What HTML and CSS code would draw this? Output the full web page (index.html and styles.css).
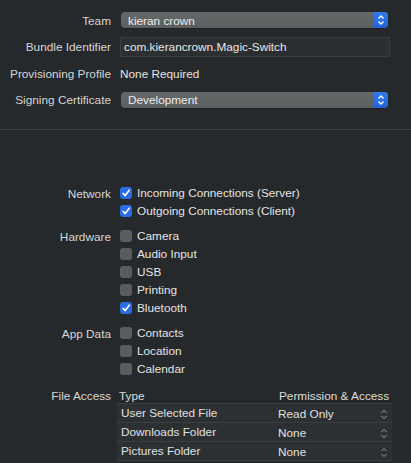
FILE: index.html
```html
<!DOCTYPE html>
<html>
<head>
<meta charset="utf-8">
<link rel="stylesheet" href="styles.css">
</head>
<body>
<div class="signing">
  <div class="row">
    <div class="label">Team</div>
    <div class="popup"><span class="popup-text">kieran crown</span><span class="popup-arrows"><svg width="8" height="10" viewBox="0 0 8 10"><path d="M1.5 3.5 L4 1 L6.5 3.5 M1.5 6.5 L4 9 L6.5 6.5" fill="none" stroke="#fff" stroke-width="1.3"/></svg></span></div>
  </div>
  <div class="row">
    <div class="label">Bundle Identifier</div>
    <div class="field">com.kierancrown.Magic-Switch</div>
  </div>
  <div class="row">
    <div class="label">Provisioning Profile</div>
    <div class="value">None Required</div>
  </div>
  <div class="row">
    <div class="label">Signing Certificate</div>
    <div class="popup"><span class="popup-text">Development</span><span class="popup-arrows"><svg width="8" height="10" viewBox="0 0 8 10"><path d="M1.5 3.5 L4 1 L6.5 3.5 M1.5 6.5 L4 9 L6.5 6.5" fill="none" stroke="#fff" stroke-width="1.3"/></svg></span></div>
  </div>
</div>
<div class="separator"></div>

<div class="caps">
  <div class="group">
    <div class="label glabel">Network</div>
    <div class="items">
      <div class="check on"><span class="box"><svg width="12" height="12" viewBox="0 0 12 12"><path d="M3 6.3 L5.2 8.6 L9.2 3.2" fill="none" stroke="#fff" stroke-width="1.6" stroke-linecap="round" stroke-linejoin="round"/></svg></span>Incoming Connections (Server)</div>
      <div class="check on"><span class="box"><svg width="12" height="12" viewBox="0 0 12 12"><path d="M3 6.3 L5.2 8.6 L9.2 3.2" fill="none" stroke="#fff" stroke-width="1.6" stroke-linecap="round" stroke-linejoin="round"/></svg></span>Outgoing Connections (Client)</div>
    </div>
  </div>
  <div class="group">
    <div class="label glabel">Hardware</div>
    <div class="items">
      <div class="check"><span class="box"></span>Camera</div>
      <div class="check"><span class="box"></span>Audio Input</div>
      <div class="check"><span class="box"></span>USB</div>
      <div class="check"><span class="box"></span>Printing</div>
      <div class="check on"><span class="box"><svg width="12" height="12" viewBox="0 0 12 12"><path d="M3 6.3 L5.2 8.6 L9.2 3.2" fill="none" stroke="#fff" stroke-width="1.6" stroke-linecap="round" stroke-linejoin="round"/></svg></span>Bluetooth</div>
    </div>
  </div>
  <div class="group">
    <div class="label glabel">App Data</div>
    <div class="items">
      <div class="check"><span class="box"></span>Contacts</div>
      <div class="check"><span class="box"></span>Location</div>
      <div class="check"><span class="box"></span>Calendar</div>
    </div>
  </div>
  <div class="group">
    <div class="label glabel flabel">File Access</div>
    <div class="table">
      <div class="thead">
        <div class="c1">Type</div>
        <div class="c2">Permission &amp; Access</div>
      </div>
      <div class="trow">
        <div class="c1">User Selected File</div>
        <div class="c2 sel">Read Only<svg class="step" width="8" height="11" viewBox="0 0 8 11"><path d="M1.5 4 L4 1.5 L6.5 4 M1.5 7 L4 9.5 L6.5 7" fill="none" stroke="#9a9c9e" stroke-width="1"/></svg></div>
      </div>
      <div class="trow">
        <div class="c1">Downloads Folder</div>
        <div class="c2 sel">None<svg class="step" width="8" height="11" viewBox="0 0 8 11"><path d="M1.5 4 L4 1.5 L6.5 4 M1.5 7 L4 9.5 L6.5 7" fill="none" stroke="#9a9c9e" stroke-width="1"/></svg></div>
      </div>
      <div class="trow">
        <div class="c1">Pictures Folder</div>
        <div class="c2 sel">None<svg class="step" width="8" height="11" viewBox="0 0 8 11"><path d="M1.5 4 L4 1.5 L6.5 4 M1.5 7 L4 9.5 L6.5 7" fill="none" stroke="#9a9c9e" stroke-width="1"/></svg></div>
      </div>
    </div>
  </div>
</div>
</body>
</html>
```

FILE: styles.css
```css
html, body {
  margin: 0;
  padding: 0;
  background: #26292b;
  height: 100%;
  overflow: hidden;
}
body {
  font-family: "Liberation Sans", Arial, sans-serif;
  font-size: 11.8px;
  color: #dedede;
}
.signing {
  display: flex;
  flex-direction: column;
  gap: 6.5px;
  padding-top: 10px;
}
.row {
  display: flex;
  align-items: center;
  height: 20px;
  gap: 9px;
}
.row .label, .value, .popup-text, .field {
  padding-top: 1px;
}
.label {
  width: 111px;
  flex: none;
  text-align: right;
  color: #d6d6d6;
  white-space: nowrap;
}
.popup {
  margin-left: 1px;
  width: 267px;
  height: 16px;
  border-radius: 4px;
  background: linear-gradient(#656869, #5c5f60);
  display: flex;
  align-items: center;
  overflow: hidden;
  box-shadow: 0 0.5px 0 rgba(0,0,0,0.4);
}
.popup-text {
  flex: 1;
  padding-left: 7px;
  color: #ececec;
}
.popup-arrows {
  width: 14px;
  height: 16px;
  background: linear-gradient(#3179ee, #2264d8);
  display: flex;
  align-items: center;
  justify-content: center;
}
.field {
  width: 265px;
  height: 17px;
  border: 1px solid #3a3d3f;
  background: #2c2f31;
  padding-left: 3px;
  display: flex;
  align-items: center;
  color: #e8e8e8;
  box-sizing: content-box;
}
.value {
  color: #e4e4e4;
}
.separator {
  margin-top: 19.5px;
  height: 1px;
  background: #3b3e40;
}
.caps {
  padding-top: 54px;
  display: flex;
  flex-direction: column;
  gap: 7px;
}
.group {
  display: flex;
  gap: 9px;
  align-items: flex-start;
}
.glabel {
  height: 18px;
  line-height: 20px;
}
.items {
  display: flex;
  flex-direction: column;
}
.check {
  height: 18px;
  display: flex;
  align-items: center;
  gap: 5px;
  color: #e4e4e4;
  line-height: 20px;
}
.box {
  width: 12px;
  height: 12px;
  border-radius: 3px;
  background: #5a5c5e;
  display: flex;
  align-items: center;
  justify-content: center;
}
.check.on .box {
  background: #2a6be3;
}
.flabel {
  height: 19px;
  line-height: 22px;
}
.table {
  margin-left: -3px;
  width: 275px;
  display: flex;
  flex-direction: column;
}
.thead {
  height: 19px;
  display: flex;
  align-items: center;
  padding-top: 3px;
  box-sizing: border-box;
  border-bottom: 1px solid #3b3e40;
  color: #dcdcdc;
}
.thead .c1 { padding-left: 2px; }
.thead .c2 { padding-left: 3px; }
.c1 {
  width: 159px;
  flex: none;
  padding-left: 4px;
  box-sizing: border-box;
}
.c2 {
  flex: 1;
  display: flex;
  align-items: center;
  padding-left: 2px;
}
.trow {
  height: 19px;
  display: flex;
  align-items: center;
  background: #2d3032;
  border-bottom: 1px solid #3b3e40;
  color: #e0e0e0;
  box-sizing: border-box;
}
.trow .c1 { padding-bottom: 1px; }
.sel { padding-top: 2px; }
.step {
  margin-left: auto;
  margin-right: 4px;
}
```
